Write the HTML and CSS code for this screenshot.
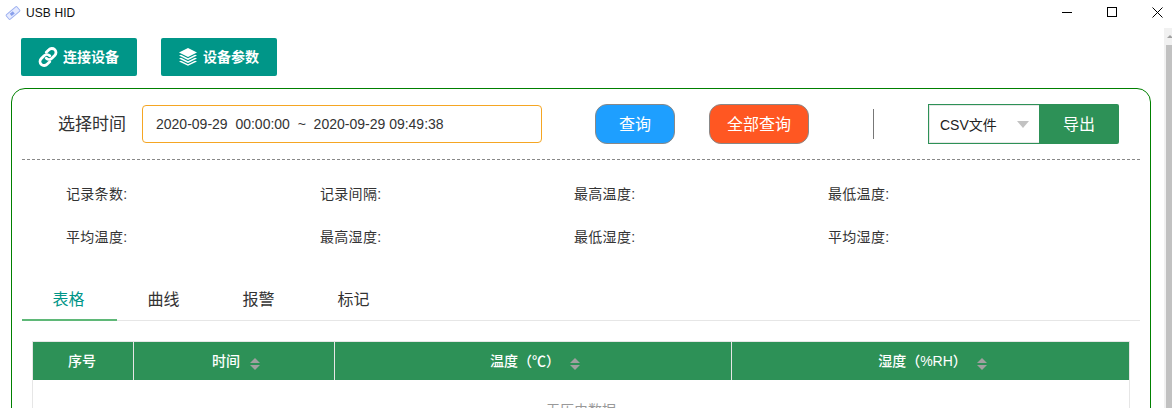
FILE: index.html
```html
<!DOCTYPE html>
<html lang="zh">
<head>
<meta charset="utf-8">
<title>USB HID</title>
<link rel="stylesheet" href="styles.css">
</head>
<body>
<div class="window">
  <header class="titlebar">
    <div class="title">
      <svg class="app-icon" width="16" height="16" viewBox="0 0 16 16"><g transform="rotate(-40 8 8)"><rect x="1" y="5" width="14" height="6" rx="1" fill="#e6ebff" stroke="#9fb2f0"/><rect x="5" y="6.500" width="4" height="3" fill="#8aa0ec"/></g></svg>
      <span>USB HID</span>
    </div>
    <div class="controls">
      <svg width="11" height="11" viewBox="0 0 11 11"><path d="M0 5.500h10" stroke="#000"/></svg>
      <svg width="11" height="11" viewBox="0 0 11 11"><rect x=".5" y=".5" width="9" height="9" fill="none" stroke="#000"/></svg>
      <svg width="11" height="11" viewBox="0 0 11 11"><path d="M.5.5l10 10M10.500.5l-10 10" stroke="#000"/></svg>
    </div>
  </header>
  <div class="scrollbar"><div class="scroll-up"></div><div class="scroll-thumb"></div></div>
  <main class="content">
    <nav class="toolbar">
      <button class="tool-btn">
        <svg width="20" height="20" viewBox="0 0 20 20" fill="none" stroke="#fff" stroke-width="2.800" stroke-linecap="round"><path d="M8.300 5.200l2.600-2.400a4 4 0 0 1 6 5.500l-3 3a4 4 0 0 1-5.600 0"/><path d="M11.700 14.800l-2.600 2.400a4 4 0 0 1-6-5.500l3-3a4 4 0 0 1 5.600 0"/></svg>
        <span class="tool-text">连接设备</span>
      </button>
      <button class="tool-btn">
        <svg width="20" height="18" viewBox="0 0 20 18" fill="#fff"><path d="M10 0l9 4.500-9 4.500-9-4.500z"/><path d="M1 7.500l2-.8 7 3.500 7-3.500 2 .8-9 4.500z"/><path d="M1 10.500l2-.8 7 3.500 7-3.500 2 .8-9 4.500z"/><path d="M1 13.500l2-.8 7 3.500 7-3.500 2 .8-9 4.300z"/></svg>
        <span class="tool-text">设备参数</span>
      </button>
    </nav>
    <section class="panel">
      <div class="query-row">
        <label class="range-label">选择时间</label>
        <div class="range-input">2020-09-29&nbsp; 00:00:00&nbsp; ~&nbsp; 2020-09-29 09:49:38</div>
        <button class="pill pill-blue">查询</button>
        <button class="pill pill-orange">全部查询</button>
        <div class="divider"></div>
        <div class="export">
          <div class="select"><span>CSV文件</span><i class="caret"></i></div>
          <button class="export-btn">导出</button>
        </div>
      </div>
      <div class="stats">
        <div>记录条数:</div><div>记录间隔:</div><div>最高温度:</div><div>最低温度:</div>
        <div>平均温度:</div><div>最高湿度:</div><div>最低湿度:</div><div>平均湿度:</div>
      </div>
      <div class="tabs">
        <div class="tab active">表格</div>
        <div class="tab">曲线</div>
        <div class="tab">报警</div>
        <div class="tab">标记</div>
      </div>
      <div class="table">
        <div class="thead">
          <div class="th c1">序号</div>
          <div class="th c2">时间<i class="sort"></i></div>
          <div class="th c3">温度（℃）<i class="sort"></i></div>
          <div class="th c3">湿度（%RH）<i class="sort"></i></div>
        </div>
        <div class="empty">无历史数据</div>
      </div>
    </section>
  </main>
</div>
</body>
</html>
```
FILE: styles.css
```css
* { box-sizing: border-box; }
html, body { margin: 0; height: 100%; overflow: hidden; background: #fff; }
body { font-family: "Liberation Sans", "Noto Sans CJK SC", sans-serif; color: #222; }
button { font-family: inherit; cursor: pointer; }
.window { position: relative; height: 408px; overflow: hidden; }
.titlebar { height: 25px; display: flex; justify-content: space-between; align-items: center; }
.title { display: flex; align-items: center; gap: 5px; padding-left: 5px; font-size: 12px; letter-spacing: .1px; color: #111; }
.app-icon { display: block; }
.controls { display: flex; gap: 34px; padding-right: 9px; align-items: center; }
.controls svg { display: block; }
.scrollbar { position: absolute; top: 28px; right: 0; width: 8px; bottom: 0; background: #f1f1f1; }
.scroll-up { height: 17px; position: relative; }
.scroll-up::after { content: ""; position: absolute; left: 3px; top: 7px; border: 3px solid transparent; border-bottom: 3px solid #a0a0a0; border-top: 0; }
.scroll-thumb { margin-left: 2px; height: 380px; background: #c1c1c1; }
.content { padding: 13px 21px 0 11px; }
.toolbar { display: flex; gap: 24px; padding-left: 10px; }
.tool-btn { width: 116px; height: 38px; border: 0; border-radius: 2px; background: #009688; color: #fff; font-size: 14px; font-weight: 700; display: flex; align-items: center; justify-content: center; gap: 5px; padding: 0 1px 0 0; }
.tool-text { padding-bottom: 2px; }
.panel { margin-top: 12px; width: 1140px; height: 400px; border: 1px solid #008000; border-radius: 14px; padding: 15px 10px 0; }
.query-row { display: flex; align-items: center; height: 40px; }
.range-label { width: 120px; padding: 0 0 3px 36px; font-size: 17px; color: #333; white-space: nowrap; }
.range-input { width: 400px; height: 38px; border: 1px solid #f5a623; border-radius: 4px; padding-left: 13px; font-size: 14px; line-height: 36px; color: #333; white-space: nowrap; }
.pill { height: 40px; border: 1px solid #888; border-radius: 12px; color: #fff; font-size: 16px; padding: 0 0 3px; }
.pill-blue { width: 80px; margin-left: 53px; background: #1e9fff; }
.pill-orange { width: 100px; margin-left: 34px; background: #ff5722; }
.divider { width: 1px; height: 30px; background: #777; margin-left: 64px; }
.export { display: flex; margin-left: 54px; height: 40px; }
.select { width: 111px; border: 1px solid #2d9157; border-right: 0; box-shadow: inset 1px 1px 0 #e6e6e6, inset 0 -1px 0 #e6e6e6; display: flex; align-items: center; justify-content: space-between; padding: 0 10px 0 11px; font-size: 14px; color: #222; }
.caret { width: 0; height: 0; border: 6px solid transparent; border-top: 7px solid #c2c2c2; border-bottom: 0; }
.export-btn { width: 80px; border: 0; border-radius: 0 2px 2px 0; background: #2d9157; color: #fff; font-size: 16px; padding: 0 0 3px; }
.stats { margin-top: 15px; border-top: 1px dashed #888; width: 1118px; padding: 13px 0 0 44px; display: grid; grid-template-columns: repeat(4, 254px); grid-auto-rows: 43px; font-size: 14px; letter-spacing: .3px; line-height: 43px; color: #333; }
.tabs { margin-top: 21px; width: 1118px; display: flex; height: 41px; border-bottom: 1px solid #e6e6e6; }
.tab { width: 95px; padding-right: 2px; text-align: center; font-size: 16px; line-height: 40px; color: #333; }
.tab.active { color: #009688; height: 41px; border-bottom: 2px solid #5fb878; }
.table { margin: 20px 0 0 10px; width: 1098px; border: 1px solid #e6e6e6; border-bottom: 0; }
.thead { display: flex; height: 38px; background: #2d9157; color: #fff; font-size: 14px; font-weight: 500; }
.th { display: flex; align-items: center; justify-content: center; border-right: 1px solid #e6e6e6; padding: 0 0 2px 4px; flex: none; }
.th:last-child { border-right: 0; }
.c1 { width: 101px; padding: 0 2px 2px 0; }
.c2 { width: 201px; }
.c3 { width: 397px; }
.sort { position: relative; width: 10px; height: 12px; margin: 7px 0 0 10px; }
.sort::before, .sort::after { content: ""; position: absolute; left: 0; border: 5px solid transparent; }
.sort::before { top: 0; border-bottom: 5px solid #a0a0a0; border-top: 0; }
.sort::after { top: 7px; border-top: 5px solid #a0a0a0; border-bottom: 0; }
.empty { text-align: center; font-size: 14px; line-height: 20px; padding-top: 20px; color: #999; }
```
